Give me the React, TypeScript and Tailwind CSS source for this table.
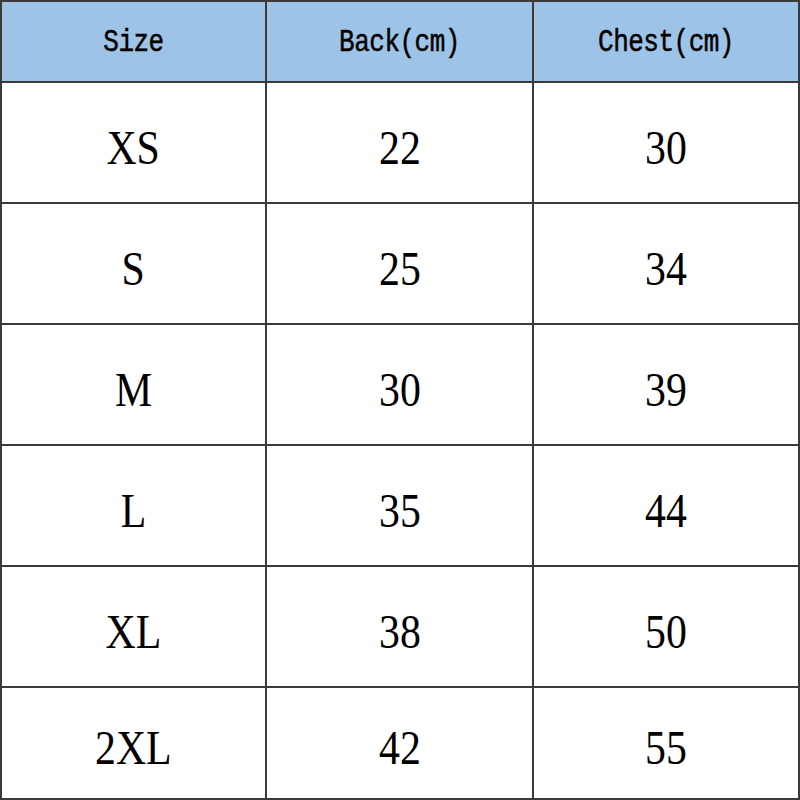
import React from 'react';

interface SizeRow {
  size: string;
  back: number;
  chest: number;
}

const rows: SizeRow[] = [
  { size: 'XS', back: 22, chest: 30 },
  { size: 'S', back: 25, chest: 34 },
  { size: 'M', back: 30, chest: 39 },
  { size: 'L', back: 35, chest: 44 },
  { size: 'XL', back: 38, chest: 50 },
  { size: '2XL', back: 42, chest: 55 },
];

const headers = ['Size', 'Back(cm)', 'Chest(cm)'];

export default function App() {
  return (
    <div className="w-[800px] h-[800px] bg-white">
      {/* Size chart */}
      <div className="grid grid-cols-[265px_267px_266px] grid-rows-[81px_121px_121px_121px_121px_121px_112px] border-t-2 border-l-2 border-[#3a3a3a] w-[800px] h-[800px] text-black">
        {headers.map((h) => (
          <div
            key={h}
            className="flex items-center justify-center bg-[#9dc3e6] border-r-2 border-b-2 border-[#3a3a3a] pt-1"
          >
            <span className="inline-block font-['Liberation_Mono',monospace] text-[26px] tracking-[-0.5px] scale-y-[1.2] [-webkit-text-stroke:0.4px_black]">
              {h}
            </span>
          </div>
        ))}
        {rows.map((r) =>
          [r.size, r.back, r.chest].map((v, i) => (
            <div
              key={`${r.size}-${i}`}
              className="flex items-center justify-center border-r-2 border-b-2 border-[#3a3a3a] pt-3"
            >
              <span className="inline-block font-['Liberation_Serif',serif] text-[44px] leading-none scale-x-[0.95] scale-y-[1.1]">
                {v}
              </span>
            </div>
          ))
        )}
      </div>
    </div>
  );
}
